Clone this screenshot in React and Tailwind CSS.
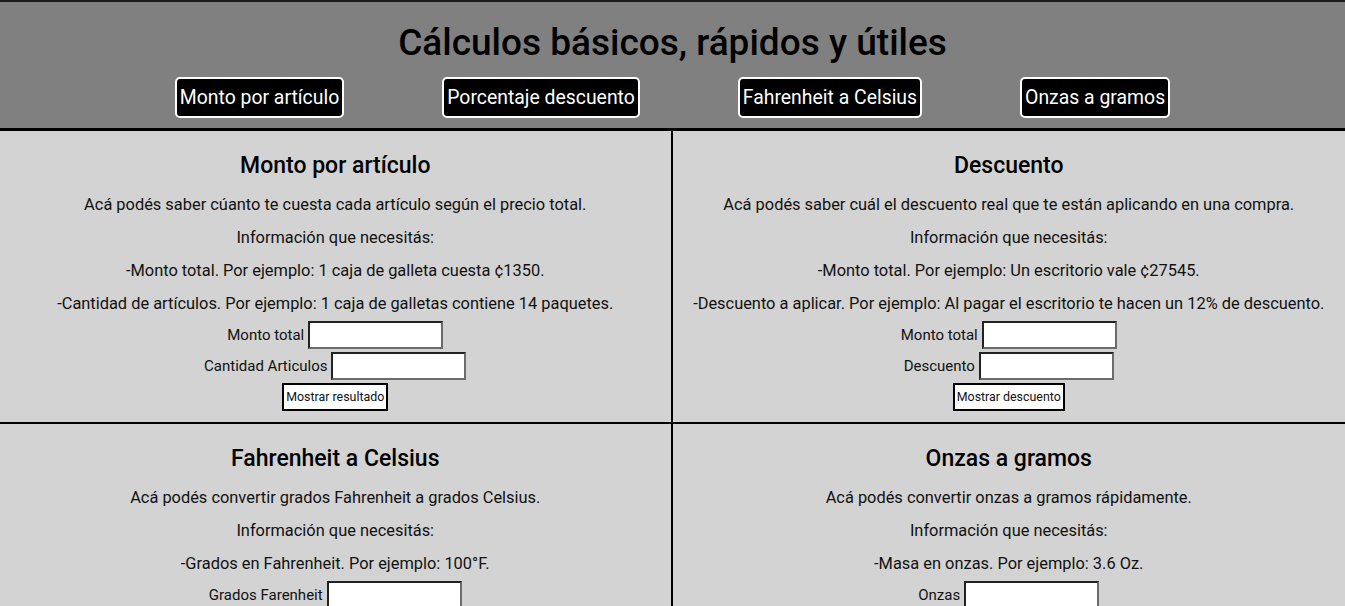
import { useState } from 'react';

const font = { fontFamily: 'Roboto, "Noto Sans", sans-serif' };

const cards = [
  {
    title: 'Monto por artículo',
    intro: 'Acá podés saber cúanto te cuesta cada artículo según el precio total.',
    needs: [
      '-Monto total. Por ejemplo: 1 caja de galleta cuesta ¢1350.',
      '-Cantidad de artículos. Por ejemplo: 1 caja de galletas contiene 14 paquetes.',
    ],
    fields: ['Monto total', 'Cantidad Articulos'],
    action: 'Mostrar resultado',
  },
  {
    title: 'Descuento',
    intro: 'Acá podés saber cuál el descuento real que te están aplicando en una compra.',
    needs: [
      '-Monto total. Por ejemplo: Un escritorio vale ¢27545.',
      '-Descuento a aplicar. Por ejemplo: Al pagar el escritorio te hacen un 12% de descuento.',
    ],
    fields: ['Monto total', 'Descuento'],
    action: 'Mostrar descuento',
  },
  {
    title: 'Fahrenheit a Celsius',
    intro: 'Acá podés convertir grados Fahrenheit a grados Celsius.',
    needs: ['-Grados en Fahrenheit. Por ejemplo: 100°F.'],
    fields: ['Grados Farenheit'],
    action: 'Mostrar Celsius',
  },
  {
    title: 'Onzas a gramos',
    intro: 'Acá podés convertir onzas a gramos rápidamente.',
    needs: ['-Masa en onzas. Por ejemplo: 3.6 Oz.'],
    fields: ['Onzas'],
    action: 'Mostrar gramos',
  },
];

const nav = ['Monto por artículo', 'Porcentaje descuento', 'Fahrenheit a Celsius', 'Onzas a gramos'];

function Card({ card, index }) {
  const [values, setValues] = useState(card.fields.map(() => ''));
  const left = index % 2 === 0;
  const top = index < 2;

  return (
    <section
      className={`flex flex-col items-center bg-[#d3d3d3] pt-[20px] pb-[11px] ${left ? 'border-r-2 border-black' : ''} ${top ? 'border-b-2 border-black' : ''}`}
    >
      <h2 className="text-[23px] leading-[29px] font-medium text-black mb-[15px]">{card.title}</h2>
      <p className="text-[16.4px] leading-[19px] mb-[14px] text-[#111]">{card.intro}</p>
      <p className="text-[16.4px] leading-[19px] mb-[14px] text-[#111]">Información que necesitás:</p>
      {card.needs.map((n, i) => (
        <p
          key={i}
          className={`text-[16.4px] leading-[19px] text-[#111] ${i === card.needs.length - 1 ? 'mb-[8px]' : 'mb-[14px]'}`}
        >
          {n}
        </p>
      ))}
      {card.fields.map((f, i) => (
        <div key={f} className="flex items-center gap-[4px] mb-[3px]">
          <label className="text-[15px] text-[#111]">{f}</label>
          <input
            value={values[i]}
            onChange={(e) => setValues((prev) => prev.map((v, j) => (j === i ? e.target.value : v)))}
            className="w-[135px] h-[28px] bg-white border-2 border-t-[#222] border-l-[#222] border-r-[#6b6b6b] border-b-[#6b6b6b] px-1 text-[14px] outline-none"
          />
        </div>
      ))}
      <button className="h-[28px] px-[2px] bg-white border-2 border-black text-[12.4px] text-[#111]">
        {card.action}
      </button>
    </section>
  );
}

export default function App() {
  return (
    <div style={font} className="min-h-screen bg-[#d3d3d3] text-center">
      <header className="bg-[#808080] border-t-2 border-[#1a1a1a] border-b-[3px] border-b-black pt-[17px] pb-[10px]">
        <h1 className="text-[37px] leading-[47px] font-medium text-black">Cálculos básicos, rápidos y útiles</h1>
        <nav className="flex justify-center gap-[98px] mt-[11px]">
          {nav.map((n) => (
            <button
              key={n}
              className="h-[41px] px-[3px] bg-black text-white text-[19.4px] border-2 border-white rounded-[5px]"
            >
              {n}
            </button>
          ))}
        </nav>
      </header>
      <main className="grid grid-cols-2">
        {cards.map((c, i) => (
          <Card key={c.title} card={c} index={i} />
        ))}
      </main>
    </div>
  );
}
